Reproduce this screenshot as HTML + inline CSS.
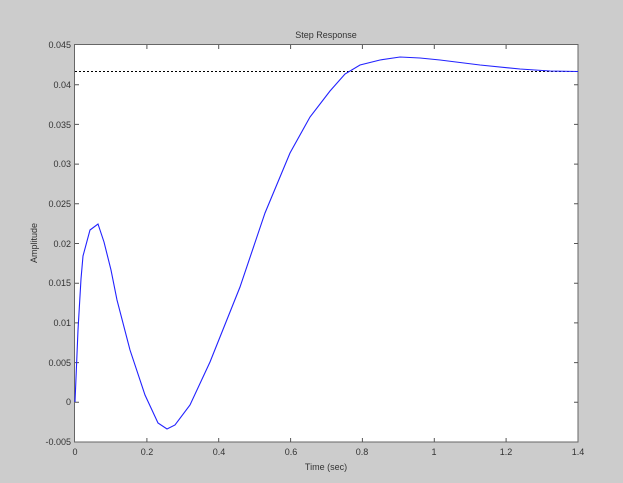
<!DOCTYPE html><html><head><style>body{margin:0;background:#ccc}svg{display:block}text{font-family:"Liberation Sans",sans-serif;font-size:9px;fill:#333}</style></head><body>
<svg width="623" height="483" viewBox="0 0 623 483">
<rect width="623" height="483" fill="#cccccc"/>
<rect x="75" y="45" width="503" height="397" fill="#fff"/>
<g stroke="#555" stroke-width="1">
<rect x="74.5" y="44.5" width="503.5" height="397.5" fill="none" stroke="#666"/>
<path d="M146.9,442v-4M218.7,442v-4M290.6,442v-4M362.4,442v-4M434.3,442v-4M506.1,442v-4M146.9,45v4M218.7,45v4M290.6,45v4M362.4,45v4M434.3,45v4M506.1,45v4
M75,402.3h4M75,362.6h4M75,322.9h4M75,283.2h4M75,243.5h4M75,203.8h4M75,164.1h4M75,124.4h4M75,84.7h4
M578,402.3h-4M578,362.6h-4M578,322.9h-4M578,283.2h-4M578,243.5h-4M578,203.8h-4M578,164.1h-4M578,124.4h-4M578,84.7h-4"/>
</g>
<line x1="75" y1="71.5" x2="578" y2="71.5" stroke="#000" stroke-dasharray="2,2"/>
<polyline fill="none" stroke="#2222ff" stroke-width="1.1" points="75,402 78,330 81,279 83,256 90,230 98,224 104,242 111,270 117,300 130,350 145,395 158,423 167,429 175,425 190,405 210,362 240,287 265,213 290,153 310,117 330,91 345,74 360,65 380,60 400,57 420,58 440,60 480,65 520,69 550,71 578,71.5"/>
<g text-anchor="end">
<text x="71" y="48">0.045</text><text x="71" y="88">0.04</text><text x="71" y="128">0.035</text><text x="71" y="167">0.03</text><text x="71" y="207">0.025</text><text x="71" y="247">0.02</text><text x="71" y="286">0.015</text><text x="71" y="326">0.01</text><text x="71" y="366">0.005</text><text x="71" y="405">0</text><text x="71" y="445">-0.005</text>
</g>
<g text-anchor="middle">
<text x="75" y="455">0</text><text x="147" y="455">0.2</text><text x="219" y="455">0.4</text><text x="291" y="455">0.6</text><text x="362" y="455">0.8</text><text x="434" y="455">1</text><text x="506" y="455">1.2</text><text x="578" y="455">1.4</text>
<text x="326" y="470" fill="#000">Time (sec)</text>
<text x="326" y="38" fill="#000">Step Response</text>
<text transform="translate(37,243) rotate(-90)" fill="#000">Amplitude</text>
</g>
</svg></body></html>
